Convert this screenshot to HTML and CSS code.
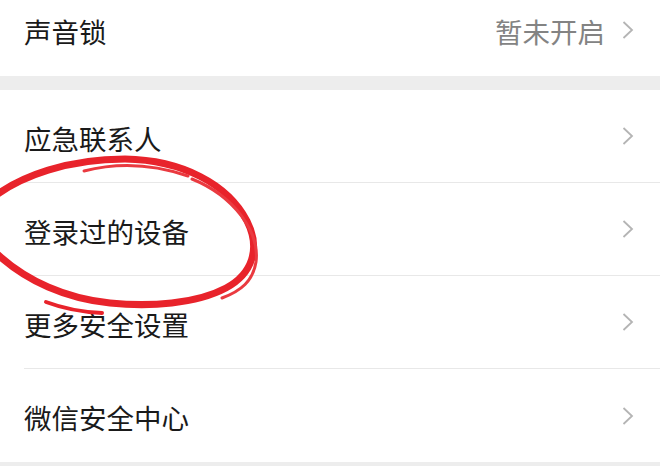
FILE: index.html
```html
<!DOCTYPE html>
<html lang="zh-CN">
<head>
    <meta charset="UTF-8">
    <meta name="viewport" content="width=device-width, initial-scale=1.0">
    <title>账号与安全</title>
    <link rel="stylesheet" href="styles.css">
</head>
<body>
    <div class="page">
        <div class="group first">
            <div class="cell">
                <div class="cell-inner">
                    <span class="title">声音锁</span>
                    <span class="value">暂未开启</span>
                    <svg class="arrow" viewBox="0 0 12 20"><path d="M1.5 2 L10 10 L1.5 18"/></svg>
                </div>
            </div>
        </div>

        <div class="group">
            <div class="cell">
                <div class="cell-inner">
                    <span class="title">应急联系人</span>
                    <svg class="arrow" viewBox="0 0 12 20"><path d="M1.5 2 L10 10 L1.5 18"/></svg>
                </div>
            </div>
            <div class="cell">
                <div class="cell-inner">
                    <span class="title">登录过的设备</span>
                    <svg class="arrow" viewBox="0 0 12 20"><path d="M1.5 2 L10 10 L1.5 18"/></svg>
                </div>
            </div>
            <div class="cell">
                <div class="cell-inner">
                    <span class="title">更多安全设置</span>
                    <svg class="arrow" viewBox="0 0 12 20"><path d="M1.5 2 L10 10 L1.5 18"/></svg>
                </div>
            </div>
            <div class="cell">
                <div class="cell-inner">
                    <span class="title">微信安全中心</span>
                    <svg class="arrow" viewBox="0 0 12 20"><path d="M1.5 2 L10 10 L1.5 18"/></svg>
                </div>
            </div>
        </div>

        <!-- hand drawn red circle around the devices row -->
        <svg class="mark" viewBox="0 0 660 466">
            <path class="stroke-main" d="M-10 200 C 20 175, 70 159, 125 159 C 182 160, 228 184, 247 221 C 261 249, 252 274, 226 288 C 196 304, 150 307, 110 303 C 70 299, 25 283, -10 247"/>
            <path class="stroke-thin" d="M84 171 C 115 163, 150 163, 188 176"/>
            <path class="stroke-thin" d="M192 179 C 234 196, 260 232, 256 262 C 253 281, 241 291, 222 298"/>
            <path class="stroke-tail" d="M46 302 C 62 308, 80 312, 102 313"/>
        </svg>
    </div>
</body>
</html>
```

FILE: styles.css
```css
body {
    margin: 0;
    background-color: #ededed;
    font-family: "Noto Sans CJK SC", "Noto Sans", sans-serif;
    overflow: hidden;
}
.page {
    position: relative;
    width: 660px;
    height: 466px;
    overflow: hidden;
}
.group {
    background: white;
    margin-bottom: 14px;
}
.group.first {
    margin-top: -17px;
}
.cell {
    padding-left: 24px;
}
.cell-inner {
    height: 92px;
    border-bottom: 1px solid #e8e8e8;
    display: flex;
    align-items: center;
    padding-right: 26px;
}
.cell:last-child .cell-inner {
    border-bottom: none;
    height: 93px;
}
.title {
    flex: 1;
    font-size: 27.5px;
    color: #1a1a1a;
    padding-top: 3px;
}
.value {
    font-size: 27.5px;
    color: #838383;
    margin-right: 17px;
    padding-top: 3px;
}
.arrow {
    width: 12px;
    height: 20px;
    fill: none;
    stroke: #b4b4b4;
    stroke-width: 1.8;
}
.mark {
    position: absolute;
    top: 0;
    left: 0;
    width: 660px;
    height: 466px;
    pointer-events: none;
    fill: none;
    stroke-linecap: round;
}
.stroke-main {
    stroke: #e8232b;
    stroke-width: 7;
}
.stroke-thin {
    stroke: #ea3a40;
    stroke-width: 3;
}
.stroke-tail {
    stroke: #e8232b;
    stroke-width: 4;
}
```
